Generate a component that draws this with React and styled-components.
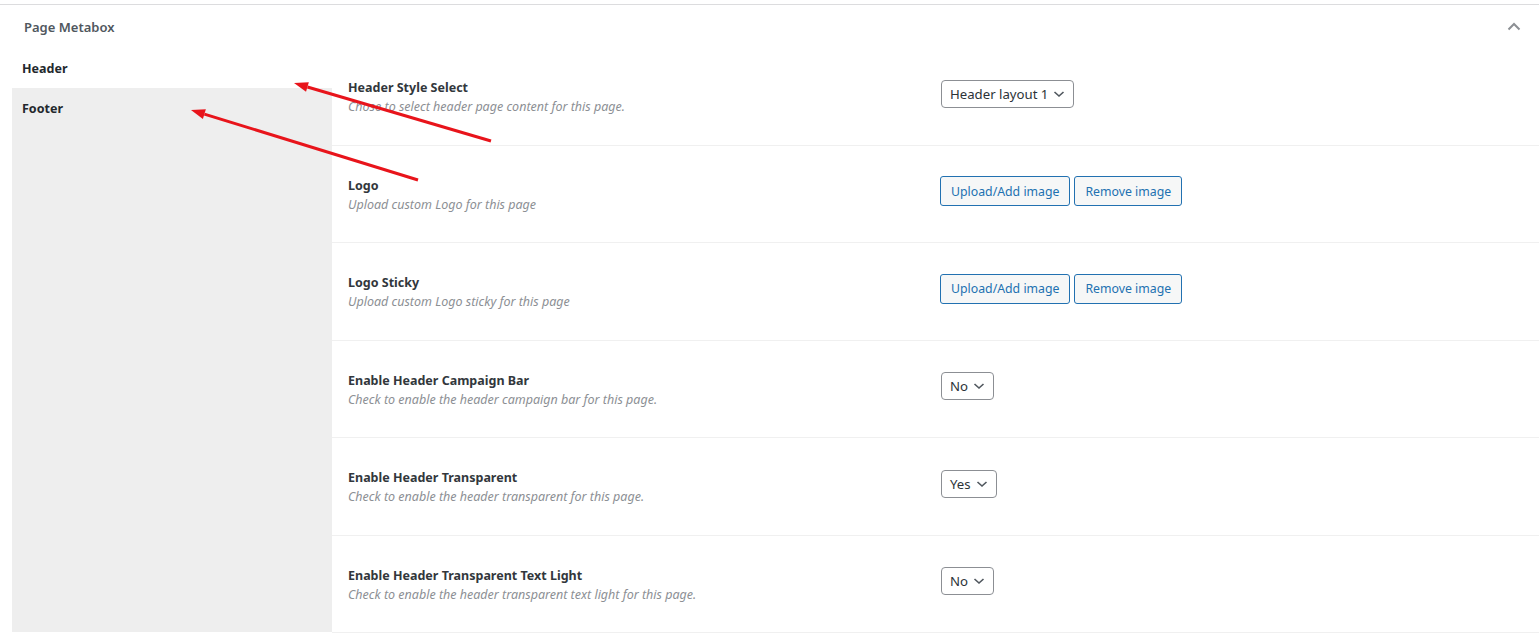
import React from 'react';
import styled, { createGlobalStyle } from 'styled-components';

const GlobalStyle = createGlobalStyle`
	html, body {
		margin: 0;
		padding: 0;
		background: #ffffff;
	}
	body {
		font-family: "Noto Sans", "Open Sans", sans-serif;
		color: #1d2327;
	}
`

//METABOX
const Postbox = styled.div`
	position: relative;
	margin-top: 4px;
	border-top: 1px solid #dcdcde;
	background: #fff;
	height: 628px;
	display: flex;
	flex-direction: column;
`
const PostboxHeader = styled.div`
	height: 43px;
	display: flex;
	align-items: center;
	justify-content: space-between;
	padding: 0 17px 0 24px;
`
const Title = styled.h2`
	margin: 0;
	font-size: 13px;
	font-weight: 600;
	color: #50575e;
`
const Toggle = styled.button`
	border: 0;
	background: none;
	padding: 0;
	width: 16px;
	height: 16px;
	display: flex;
	align-items: center;
	justify-content: center;
`
const Body = styled.div`
	flex: 1;
	display: flex;
	padding-left: 12px;
	min-height: 0;
`
//TABS
const Tabs = styled.ul`
	margin: 0;
	padding: 0;
	list-style: none;
	width: 320px;
	background: #eeeeee;
	display: flex;
	flex-direction: column;
	border-bottom: 1px solid #fff;
`
const Tab = styled.li`
	height: 40px;
	box-sizing: border-box;
	display: flex;
	align-items: center;
	font-size: 12.5px;
	font-weight: 700;
	color: #23282d;
	margin-left: ${p => (p.$active ? '-12px' : '0')};
	padding: 0 10px 0 ${p => (p.$active ? '22px' : '10px')};
	background: ${p => (p.$active ? '#fff' : 'transparent')};
`
//FIELDS
const Fields = styled.div`
	flex: 1;
	display: flex;
	flex-direction: column;
`
const Row = styled.div`
	height: 97.5px;
	box-sizing: border-box;
	border-bottom: 1px solid #f0f0f0;
	display: grid;
	grid-template-columns: 592px 1fr;
	align-items: center;
	padding: 0 16px;
`
const LabelCol = styled.div`
	display: flex;
	flex-direction: column;
	gap: 2px;
	padding-top: 2px;
`
const Label = styled.div`
	font-size: 12.5px;
	font-weight: 700;
	color: #32373c;
`
const Desc = styled.div`
	font-size: 12.5px;
	font-style: italic;
	color: #8c8f94;
`
const Controls = styled.div`
	display: flex;
	gap: 4px;
	margin-top: -5px;
`
const Select = styled.div`
	height: 28px;
	box-sizing: border-box;
	margin-left: 1px;
	border: 1px solid #8c8f94;
	border-radius: 4px;
	padding: 0 8px;
	display: flex;
	align-items: center;
	gap: 5px;
	font-family: "Noto Sans", sans-serif;
	font-size: 13.2px;
	color: #2c3338;
	background: #fff;
`
const Button = styled.button`
	height: 30px;
	box-sizing: border-box;
	padding: 0 10px;
	border: 1px solid #2271b1;
	border-radius: 3px;
	background: #f6f7f7;
	color: #2271b1;
	font-family: "Noto Sans", sans-serif;
	font-size: 12.3px;
`
const Overlay = styled.svg`
	position: absolute;
	left: 0;
	top: 0;
	pointer-events: none;
`

const Chevron = () => (
	<svg width="12" height="8" viewBox="0 0 12 8">
		<path d="M1.5 2 L6 6 L10.5 2" fill="none" stroke="#50575e" strokeWidth="1.6" />
	</svg>
)

const fields = [
	{ label: 'Header Style Select', desc: 'Chose to select header page content for this page.', select: 'Header layout 1' },
	{ label: 'Logo', desc: 'Upload custom Logo for this page', upload: true },
	{ label: 'Logo Sticky', desc: 'Upload custom Logo sticky for this page', upload: true },
	{ label: 'Enable Header Campaign Bar', desc: 'Check to enable the header campaign bar for this page.', select: 'No' },
	{ label: 'Enable Header Transparent', desc: 'Check to enable the header transparent for this page.', select: 'Yes' },
	{ label: 'Enable Header Transparent Text Light', desc: 'Check to enable the header transparent text light for this page.', select: 'No' },
]

const Arrow = ({ x1, y1, x2, y2 }) => {
	const a = Math.atan2(y2 - y1, x2 - x1)
	const len = 14
	const w = 5
	const bx = x2 - len * Math.cos(a)
	const by = y2 - len * Math.sin(a)
	const px = -Math.sin(a) * w
	const py = Math.cos(a) * w
	return (
		<g>
			<line x1={x1} y1={y1} x2={bx} y2={by} stroke="#e8141b" strokeWidth="3" />
			<polygon points={`${x2},${y2} ${bx + px},${by + py} ${bx - px},${by - py}`} fill="#e8141b" />
		</g>
	)
}

const App = () => {
	return (
		<>
			<GlobalStyle />
			<Postbox>
				<PostboxHeader>
					<Title>Page Metabox</Title>
					<Toggle aria-label="Toggle panel">
						<svg width="14" height="9" viewBox="0 0 14 9">
							<path d="M1.5 7.5 L7 2 L12.5 7.5" fill="none" stroke="#8c8f94" strokeWidth="2" />
						</svg>
					</Toggle>
				</PostboxHeader>
				<Body>
					<Tabs>
						<Tab $active>Header</Tab>
						<Tab>Footer</Tab>
					</Tabs>
					<Fields>
						{fields.map(f => (
							<Row key={f.label}>
								<LabelCol>
									<Label>{f.label}</Label>
									<Desc>{f.desc}</Desc>
								</LabelCol>
								<Controls>
									{f.select ? (
										<Select>
											{f.select}
											<Chevron />
										</Select>
									) : (
										<>
											<Button>Upload/Add image</Button>
											<Button>Remove image</Button>
										</>
									)}
								</Controls>
							</Row>
						))}
					</Fields>
				</Body>
			</Postbox>
			<Overlay width="1539" height="633">
				<Arrow x1={491} y1={141} x2={294} y2={83} />
				<Arrow x1={418} y1={180} x2={191} y2={110} />
			</Overlay>
		</>
	)
}

export default App;
